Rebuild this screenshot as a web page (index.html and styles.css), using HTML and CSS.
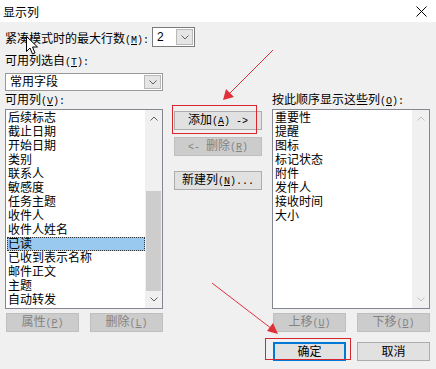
FILE: index.html
```html
<!DOCTYPE html>
<html lang="zh-CN">
<head>
    <meta charset="UTF-8" />
    <title>显示列</title>
    <link rel="stylesheet" href="styles.css">
</head>
<body>

<div class="window">
    <div class="titlebar">
        <span class="title">显示列</span>
        <svg class="close" width="11" height="11" viewBox="0 0 11 11">
            <path d="M0.5 0.5 L10.5 10.5 M10.5 0.5 L0.5 10.5" stroke="#000" stroke-width="1" fill="none"/>
        </svg>
    </div>

    <div class="content">
        <div class="max-row">
            <label class="max-label">紧凑模式时的最大行数<span class="k">(<u>M</u>):</span></label>
            <div class="combo combo-edit">
                <span class="combo-value">2</span>
                <span class="drop">
                    <svg width="8" height="5" viewBox="0 0 8 5"><polyline points="0.5,0.5 4,4 7.5,0.5" fill="none" stroke="#606060"/></svg>
                </span>
            </div>
        </div>

        <div class="panes">
            <div class="source">
                <div class="label label-src">可用列选自<span class="k">(<u>T</u>):</span></div>
                <div class="combo combo-select">
                    <span class="combo-value">常用字段</span>
                    <span class="drop">
                        <svg width="8" height="5" viewBox="0 0 8 5"><polyline points="0.5,0.5 4,4 7.5,0.5" fill="none" stroke="#606060"/></svg>
                    </span>
                </div>
            </div>

            <div class="label label-left">可用列<span class="k">(<u>V</u>):</span></div>
            <div class="label label-right">按此顺序显示这些列<span class="k">(<u>O</u>):</span></div>

            <div class="listbox list-left">
                <ul class="items">
                    <li>后续标志</li>
                    <li>截止日期</li>
                    <li>开始日期</li>
                    <li>类别</li>
                    <li>联系人</li>
                    <li>敏感度</li>
                    <li>任务主题</li>
                    <li>收件人</li>
                    <li>收件人姓名</li>
                    <li class="selected">已读</li>
                    <li>已收到表示名称</li>
                    <li>邮件正文</li>
                    <li>主题</li>
                    <li>自动转发</li>
                </ul>
                <div class="scrollbar">
                    <span class="arrow">
                        <svg width="8" height="5" viewBox="0 0 8 5"><polyline points="0.5,4.5 4,1 7.5,4.5" fill="none" stroke="#606060"/></svg>
                    </span>
                    <div class="track"><div class="thumb"></div></div>
                    <span class="arrow">
                        <svg width="8" height="5" viewBox="0 0 8 5"><polyline points="0.5,0.5 4,4 7.5,0.5" fill="none" stroke="#606060"/></svg>
                    </span>
                </div>
            </div>

            <div class="middle">
                <button class="btn btn-add">添加<span class="k">(<u>A</u>) -&gt;</span></button>
                <button class="btn btn-remove" disabled><span class="k">&lt;- </span>删除<span class="k">(<u>R</u>)</span></button>
                <button class="btn btn-new">新建列<span class="k">(<u>N</u>)...</span></button>
            </div>

            <div class="listbox list-right">
                <ul class="items">
                    <li>重要性</li>
                    <li>提醒</li>
                    <li>图标</li>
                    <li>标记状态</li>
                    <li>附件</li>
                    <li>发件人</li>
                    <li>接收时间</li>
                    <li>大小</li>
                </ul>
                <div class="scrollbar disabled">
                    <span class="arrow">
                        <svg width="8" height="5" viewBox="0 0 8 5"><polyline points="0.5,4.5 4,1 7.5,4.5" fill="none" stroke="#bfbfbf"/></svg>
                    </span>
                    <div class="track"></div>
                    <span class="arrow">
                        <svg width="8" height="5" viewBox="0 0 8 5"><polyline points="0.5,0.5 4,4 7.5,0.5" fill="none" stroke="#bfbfbf"/></svg>
                    </span>
                </div>
            </div>

            <div class="btn-row btn-row-left">
                <button class="btn" disabled>属性<span class="k">(<u>P</u>)</span></button>
                <button class="btn" disabled>删除<span class="k">(<u>L</u>)</span></button>
            </div>

            <div class="btn-row btn-row-right">
                <button class="btn" disabled>上移<span class="k">(<u>U</u>)</span></button>
                <button class="btn" disabled>下移<span class="k">(<u>D</u>)</span></button>
            </div>

            <div class="btn-row btn-row-ok">
                <button class="btn btn-default">确定</button>
                <button class="btn">取消</button>
            </div>
        </div>
    </div>

    <!-- red annotation marks drawn over the dialog -->
    <svg class="marks" width="436" height="369" viewBox="0 0 436 369">
        <rect x="172.5" y="105.5" width="84" height="28" fill="none" stroke="#d8262e" stroke-width="1"/>
        <rect x="265.5" y="338.5" width="85" height="21" fill="none" stroke="#d8262e" stroke-width="1"/>
        <line x1="273" y1="50" x2="228" y2="95" stroke="#e0303a" stroke-width="1"/>
        <polygon points="223,100 226,89 234,97" fill="#e0303a"/>
        <line x1="212" y1="283" x2="272" y2="329" stroke="#e0303a" stroke-width="1"/>
        <polygon points="278,334 267,331 273,323" fill="#e0303a"/>
    </svg>

    <!-- mouse pointer -->
    <svg class="cursor" width="13" height="20" viewBox="0 0 13 20">
        <path d="M0.5 0.5 L0.5 15.5 L4 12 L6.5 18 L9 17 L6.5 11 L11.5 11 Z" fill="#fff" stroke="#000" stroke-width="1" stroke-linejoin="round"/>
    </svg>
</div>

</body>
</html>
```

FILE: styles.css
```css
* {
    box-sizing: border-box;
}
body {
    margin: 0;
    background: #f0f0f0;
    font-family: "Liberation Sans", "Noto Sans CJK SC", sans-serif;
    font-size: 12px;
    color: #000;
}
.window {
    position: relative;
    width: 436px;
    height: 369px;
    overflow: hidden;
}
.titlebar {
    height: 22px;
    background: #fff;
    display: flex;
    align-items: center;
    justify-content: space-between;
    padding: 0 9px 0 3px;
}
.title {
    font-size: 12px;
}
.content {
    padding: 5px 6px 0 5px;
}
.k {
    font-family: "Liberation Mono", monospace;
    font-size: 10px;
}
u {
    text-decoration: underline;
}
.max-row {
    display: flex;
    align-items: center;
    height: 20px;
}
.max-label {
    width: 147px;
}
.combo {
    display: flex;
    align-items: center;
    background: #fff;
    border: 1px solid #7a7a7a;
    padding: 1px;
}
.combo-value {
    flex: 1;
    padding-left: 3px;
    line-height: 14px;
}
.drop {
    width: 17px;
    align-self: stretch;
    display: flex;
    align-items: center;
    justify-content: center;
    background: #e5e5e5;
    border: 1px solid #b9b9b9;
}
.combo-edit {
    width: 43px;
    height: 20px;
}
.combo-select {
    width: 158px;
    height: 18px;
    margin-top: 4px;
    border-color: #9a9a9a;
}
.panes {
    display: grid;
    grid-template-columns: 159px 88px 158px;
    column-gap: 10px;
    grid-template-areas:
        "src    .    ."
        "lbl-l  .    lbl-r"
        "list-l mid  list-r"
        "btn-l  .    btn-r"
        ".      .    ok";
}
.source {
    grid-area: src;
}
.label {
    line-height: 18px;
    height: 18px;
}
.label-src {
    margin-top: 6px;
    line-height: 16px;
    height: 16px;
}
.label-left {
    grid-area: lbl-l;
}
.label-right {
    grid-area: lbl-r;
}
.listbox {
    height: 200px;
    background: #fff;
    border: 1px solid #828790;
    display: flex;
}
.list-left {
    grid-area: list-l;
    width: 158px;
}
.list-right {
    grid-area: list-r;
}
.items {
    flex: 1;
    list-style: none;
    margin: 0;
    padding: 1px 0 0 1px;
}
.items li {
    line-height: 14px;
    height: 14px;
    padding-left: 1px;
    white-space: nowrap;
}
.items li.selected {
    background: #99c9ef;
    outline: 1px dotted #333;
    outline-offset: -1px;
}
.scrollbar {
    width: 17px;
    background: #f0f0f0;
    display: flex;
    flex-direction: column;
}
.arrow {
    height: 17px;
    display: flex;
    align-items: center;
    justify-content: center;
}
.track {
    flex: 1;
    position: relative;
}
.thumb {
    position: absolute;
    left: 1px;
    right: 1px;
    top: 64px;
    height: 100px;
    background: #cdcdcd;
}
.middle {
    grid-area: mid;
    display: flex;
    flex-direction: column;
    padding-top: 2px;
}
.btn {
    height: 19px;
    width: 73px;
    padding: 0;
    font-family: inherit;
    font-size: 12px;
    line-height: 14px;
    color: #000;
    background: #e1e1e1;
    border: 1px solid #adadad;
}
.btn:disabled {
    background: #cccccc;
    border-color: #bfbfbf;
    color: #838383;
}
.middle .btn {
    width: 88px;
}
.btn-remove {
    margin-top: 7px;
}
.btn-new {
    margin-top: 15px;
}
.btn-row {
    display: flex;
    justify-content: space-between;
    margin-top: 4px;
}
.btn-row-left {
    grid-area: btn-l;
    width: 158px;
    padding-left: 1px;
}
.btn-row-right {
    grid-area: btn-r;
    padding-left: 1px;
}
.btn-row-ok {
    grid-area: ok;
    padding-left: 1px;
    margin-top: 10px;
}
.btn-default {
    border: 2px solid #0078d7;
}
.marks {
    position: absolute;
    left: 0;
    top: 0;
    pointer-events: none;
}
.cursor {
    position: absolute;
    left: 26px;
    top: 36px;
}
```
